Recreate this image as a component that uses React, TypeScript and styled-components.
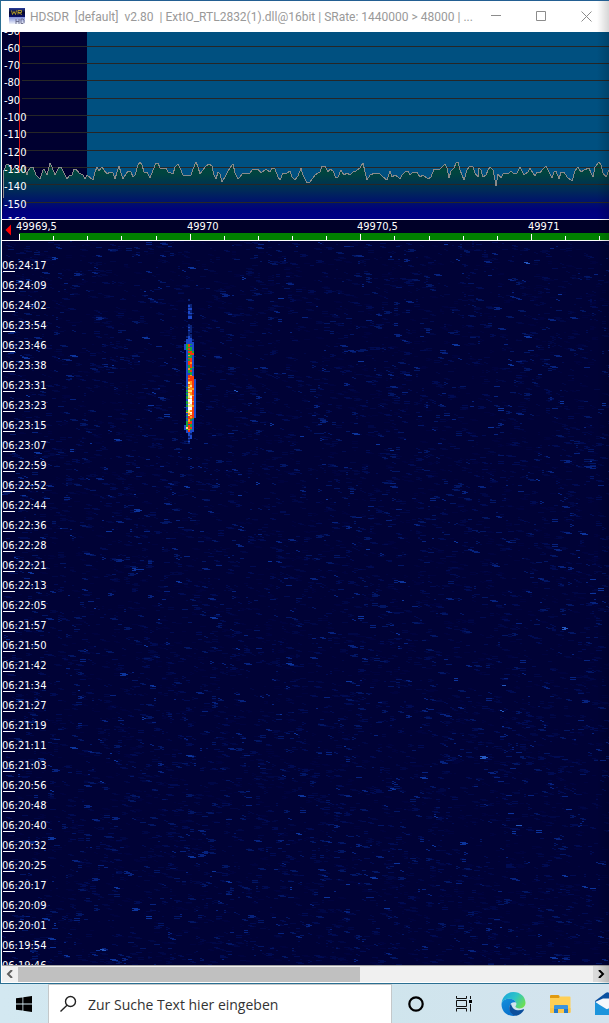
import React from "react";
import styled, { createGlobalStyle } from "styled-components";

const GlobalStyle = createGlobalStyle`
  * { box-sizing: border-box; }
  body { margin: 0; background: #d0e4ee; overflow: hidden; }
  button { border: 0; padding: 0; background: none; font: inherit; }
`;

const UI_FONT = '"Open Sans", "Noto Sans", sans-serif';
const TITLE_FONT = 'Roboto, "Open Sans", sans-serif';
const PLOT_FONT = '"DejaVu Sans Condensed", "DejaVu Sans", sans-serif';

const Desktop = styled.div`
  display: flex;
  flex-direction: column;
  height: 100vh;
`;

const Window = styled.main`
  position: relative;
  flex: 1;
  min-height: 0;
  display: flex;
  flex-direction: column;
  background: #fff;
  border: 1px solid #2b6f92;
  border-top-color: #235f92;
  border-right: 0;
  &::after {
    content: "";
    position: absolute;
    inset: 0 0 0 auto;
    width: 12px;
    background: linear-gradient(to right, rgba(0, 0, 0, 0), rgba(0, 0, 0, 0.16));
    pointer-events: none;
  }
`;

const TitleBar = styled.header`
  display: flex;
  align-items: center;
  height: 31px;
  padding-left: 8px;
  gap: 4px;
`;

const Title = styled.h1`
  flex: 1;
  min-width: 0;
  margin: 0;
  white-space: pre;
  font: 400 12px/20px ${TITLE_FONT};
  color: #999;
`;

const Controls = styled.div`
  display: flex;
`;

const ControlButton = styled.button`
  display: grid;
  place-items: center;
  width: 45px;
  height: 28px;
`;

const Plots = styled.div`
  flex: 1;
  min-height: 0;
  margin-left: 1px;
  display: flex;
  flex-direction: column;
`;

const PlotSvg = styled.svg<{ $height: number }>`
  display: block;
  flex: none;
  width: 100%;
  height: ${(p) => p.$height}px;
  font: 11px ${PLOT_FONT};
`;

const Waterfall = styled.section`
  position: relative;
  flex: 1;
  min-height: 0;
  overflow: hidden;
  background: #000236;
`;

const NoiseSvg = styled.svg`
  position: absolute;
  inset: 0;
  width: 100%;
  height: 100%;
`;

const TimeList = styled.ol`
  position: relative;
  margin: 0;
  padding: 14px 0 0;
  list-style: none;
`;

const TimeRow = styled.li`
  height: 20px;
  font: 11px/22px ${PLOT_FONT};
  color: #fff;
  background: linear-gradient(#fff, #fff) 1px 16px / 12px 1px no-repeat;
`;

const ScrollBar = styled.div`
  display: flex;
  flex: none;
  height: 18px;
  border-top: 1px solid #a0a0a0;
  border-bottom: 1px solid #fff;
  background: #f0f0f0;
`;

const ScrollButton = styled.button<{ $hot?: boolean }>`
  display: grid;
  place-items: center;
  width: 16px;
  background: ${(p) => (p.$hot ? "#dadada" : "#f0f0f0")};
`;

const Track = styled.div`
  flex: 1;
  padding-top: 1px;
`;

const Thumb = styled.div`
  width: 59.5%;
  height: 100%;
  background: #c0c0c0;
`;

const TaskBar = styled.footer`
  display: flex;
  height: 39px;
  overflow: hidden;
  background: linear-gradient(to right, #d3e8f1, #cfe5ed 60%, #d4e3ee);
`;

const TaskButton = styled.button<{ $width?: number }>`
  display: grid;
  place-items: center;
  flex: none;
  width: ${(p) => p.$width ?? 48}px;
  height: 40px;
`;

const SearchBox = styled.label`
  display: flex;
  align-items: center;
  flex: 1 0 200px;
  height: 40px;
  padding-left: 10px;
  gap: 10px;
  background: #fff;
  border: 1px solid #c4c8ca;
`;

const SearchInput = styled.input`
  flex: 1;
  min-width: 0;
  padding: 2px 0 0;
  border: 0;
  outline: 0;
  background: none;
  font: 14px/20px ${UI_FONT};
  &::placeholder {
    color: #333;
    opacity: 1;
  }
`;

const Pinned = styled.div`
  display: flex;
  flex: 0 0 119px;
  min-width: 0;
  margin-left: 2px;
  overflow: hidden;
`;

/* Trace samples as x,y pairs in thirds of a pixel, one list for each sweep. */
const SWEEPS: [number, number[]][] = [
  [0, [8,235,10,160,18,135,25,131,38,150,46,138,58,158,70,136,77,155,82,165,85,152,92,142,99,142,108,165,120,177,128,150,133,147,140,165,150,130,157,140,165,165,177,140,184,140,192,160,200,178,206,168,216,165,222,148,228,148,236,158,248,165,254,178,262,165,278,181,284,155,292,140,298,152,305,140,312,150,320,162,330,157,340,158,346,178,352,155,358,137,364,160,370,178,378,162,385,152,392,155,400,172,406,165,413,135,420,125,426,135,432,155,440,157,450,175,460,150,467,130,473,130,480,145,497,145,503,155,512,160,520,162,526,140,535,132,541,145,550,165,560,168,572,165,578,148,587,127,594,140,600,162]],
  [609, [0,150,10,137,18,133,26,138,33,165,40,178,45,155,50,162,57,187,65,172,72,158,80,145,90,133,97,160,105,178,112,172,120,158,140,158,150,148,165,148,174,158,190,147,200,155,207,145,216,147,224,172,230,180,240,160,250,163,260,152,266,170,275,180,285,168,293,145,300,165,312,188,320,185,335,165,350,155,358,137,366,137,374,155,382,147,390,153,398,175,405,170,413,150,422,165,432,158,440,165,450,155,460,153,470,143,480,130,486,155,493,180,502,165,515,158,528,160,540,170,552,180,560,152,568,170,575,165,585,172,592,178,598,165]],
  [1218, [0,152,5,152,12,165,20,155,32,155,42,170,52,165,66,178,75,170,85,147,102,147,108,140,117,133,123,145,129,173,136,152,145,145,150,130,156,127,163,150,173,180,183,150,192,137,202,140,208,160,215,172,219,145,225,150,232,170,240,165,246,150,253,140,260,150,266,180,270,198,276,162,284,173,292,162,310,160,315,152,325,163,332,160,342,140,350,158,355,165,365,155,373,145,380,160,387,168,394,155,402,158,412,147,420,137,428,155,437,173,445,155,451,152,458,178,465,157,473,157,483,170,497,182,506,152,516,140,525,155,535,150,548,143,555,160,561,170,568,140,578,127,585,135,592,158,599,170,609,150]],
];

const SWEEP_SPAN = 607;
const tracePoints: string[] = [];
for (let copy = 0; copy < 4; copy++) {
  for (const [offset, samples] of SWEEPS) {
    for (let i = 0; i < samples.length; i += 2) {
      if (copy > 0 && offset === 0 && i === 0) continue;
      const x = Math.round((offset + samples[i]) / 3) - 2 + copy * SWEEP_SPAN;
      const y = Math.round(samples[i + 1] / 3) + 88;
      tracePoints.push(`${x},${y}`);
    }
  }
}
const TRACE = tracePoints.join(" ");
const TRACE_AREA = `0,187 ${TRACE} ${SWEEP_SPAN * 4},187`;

/* Level in dB with the height of its grid line. */
const LEVELS: [number, number][] = [
  [-50, -3], [-60, 14], [-70, 31], [-80, 48], [-90, 66], [-100, 83],
  [-110, 100], [-120, 118], [-130, 135], [-140, 152], [-150, 170], [-160, 187],
];

function Spectrum() {
  return (
    <PlotSvg $height={187} role="img" aria-label="Spectrum">
      <defs>
        <linearGradient id="floor" gradientUnits="userSpaceOnUse" x1="0" y1="130" x2="0" y2="187">
          <stop offset="0" stopColor="#00483c" />
          <stop offset="0.2" stopColor="#004440" />
          <stop offset="0.5" stopColor="#002a58" />
          <stop offset="0.85" stopColor="#00007c" />
          <stop offset="1" stopColor="#000084" />
        </linearGradient>
      </defs>
      <rect width="100%" height="187" fill="#005080" />
      <rect width="85" height="187" fill="#000030" />
      <polygon points={TRACE_AREA} fill="url(#floor)" />
      {LEVELS.map(([db, y]) => (
        <rect key={db} x="20" y={y} width="100%" height="1" fill="#262626" />
      ))}
      <polyline points={TRACE} fill="none" stroke="#8a8a8a" shapeRendering="crispEdges" />
      <rect x="17" width="1" height="140" fill="#e01010" />
      {LEVELS.map(([db, y]) => (
        <text key={db} x="2" y={y + 6} fill="#fff">
          {db}
        </text>
      ))}
    </PlotSvg>
  );
}

const TICKS = Array.from({ length: 60 }, (_, i) => ({
  x: Math.round(17 + i * 34.13),
  major: i % 5 === 0,
  label: String(49969.5 + i / 10).replace(".", ","),
}));

function FrequencyScale() {
  return (
    <PlotSvg $height={22} role="img" aria-label="Frequency scale">
      <rect width="100%" height="22" fill="#fff" />
      <rect y="1" width="100%" height="20" fill="#000028" />
      <rect x="17" y="14" width="100%" height="7" fill="#008000" />
      <path d="M3.500 11l5.500-5.500v11z" fill="#f00" />
      {TICKS.map((t) => (
        <rect key={t.x} x={t.x} y={t.major ? 15 : 17} width="1" height={t.major ? 6 : 4} fill="#fff" />
      ))}
      {TICKS.filter((t) => t.major).map((t) => (
        <text key={t.x} x={t.x - 3} y="11" fill="#fff">
          {t.label}
        </text>
      ))}
    </PlotSvg>
  );
}

function makeRandom(seed: number) {
  let s = seed;
  return () => {
    s = (s * 1664525 + 1013904223) % 4294967296;
    return s / 4294967296;
  };
}

const NOISE_COLORS = ["#00033e", "#000746", "#000b52", "#021664", "#06227e", "#0c349c", "#2458c0"];
const NOISE_COUNTS = [3000, 2600, 1900, 1100, 560, 130, 8];
const random = makeRandom(2832);
const NOISE = NOISE_COLORS.map((color, level) => {
  let d = "";
  for (let i = 0; i < NOISE_COUNTS[level]; i++) {
    const x = Math.floor(random() * 304) * 2;
    const y = Math.floor(random() * 724);
    const w = 2 + Math.floor(random() * 3) * 2;
    d += `M${x} ${y}h${w}v1h-${w}z`;
    if (random() > 0.5) d += `M${x + 2} ${y + 1}h${w}v1h-${w}z`;
    if (random() > 0.8) d += `M${x} ${y + 2}h${w}v1h-${w}z`;
  }
  return { color, d };
});

const HEAT: Record<string, string> = {
  d: "#0a2274", b: "#1c48c8", g: "#18a838", r: "#f83808", o: "#ff9418", y: "#ffe088", w: "#ffffff",
};

/* Echo intensity: one string for each time step, one letter for each bin. */
const ECHO = (
  "..d.. ..... ..... ..dd. ..bd. ..dd. ..bb. ..dd. ..bd. ..bbd ..dd. ..bb. ..bb. ..... ..... ..... ..d.. ..dd. ..bd. " +
  "..dd. ..bd. ..dd. ..d.. ..dd. .dbd. ..bb. .bbbd .bbb. .bbbb bgrgb bgrbb bgggb bgrgb .bggb .brrg .bgrr " +
  ".bogb .bggb .brrb .bgrb .brrb .brob .brrb .bgrb .bgrg .bogb .bgrb .bggb .bbgb .brob .brrr .borr .brrrb " +
  ".boorb .byorb .brorb .boyrb .gyorb .booob .gyyrb .boorb .gyorb .byyob .gywrb .goyrb .bwwrb .gwwob .gywrb .bwyrb " +
  ".gyyob .bwwrb .bwwrb .gyorb .oywrb .boyrb .gyrrb .brorb .grrg .bogb .gorb .grrb .gbgb bgrgb byrrb bgogb .brbb " +
  ".bbb. ..bd. ..bb. ..db. ..bb. ..d.. ..b.. ..d.."
).split(" ");
const ECHO_TOP = 58;
const ECHO_STEP = 145 / ECHO.length;

const START_LABELS = [
  "06:24:17", "06:24:09", "06:24:02", "06:23:54", "06:23:46", "06:23:38", "06:23:31", "06:23:23", "06:23:15",
  "06:23:07", "06:22:59", "06:22:52", "06:22:44", "06:22:36", "06:22:28", "06:22:21", "06:22:13", "06:22:05",
  "06:21:57", "06:21:50", "06:21:42", "06:21:34", "06:21:27", "06:21:19", "06:21:11", "06:21:03", "06:20:56",
  "06:20:48", "06:20:40", "06:20:32", "06:20:25", "06:20:17", "06:20:09", "06:20:01", "06:19:54", "06:19:46",
];

function WaterfallView() {
  return (
    <Waterfall>
      <NoiseSvg aria-hidden="true" shapeRendering="crispEdges">
        <defs>
          <pattern id="noise" width="608" height="724" patternUnits="userSpaceOnUse">
            {NOISE.map((n) => (
              <path key={n.color} d={n.d} fill={n.color} />
            ))}
          </pattern>
        </defs>
        <rect width="100%" height="100%" fill="url(#noise)" />
        {ECHO.map((row, i) =>
          row.split("").map((cell, bin) =>
            HEAT[cell] ? (
              <rect
                key={`${i}-${bin}`}
                x={182 + bin * 2}
                y={Math.round(ECHO_TOP + i * ECHO_STEP)}
                width="2"
                height={Math.round(ECHO_TOP + (i + 1) * ECHO_STEP) - Math.round(ECHO_TOP + i * ECHO_STEP)}
                fill={HEAT[cell]}
              />
            ) : null
          )
        )}
      </NoiseSvg>
      <TimeList>
        {START_LABELS.map((t) => (
          <TimeRow key={t}>{t}</TimeRow>
        ))}
      </TimeList>
    </Waterfall>
  );
}

function AppIcon() {
  return (
    <svg width="17" height="17" viewBox="0 0 17 17" aria-hidden="true">
      <defs>
        <linearGradient id="appTop" x1="0" y1="0" x2="0" y2="1">
          <stop offset="0" stopColor="#2a3f9c" />
          <stop offset="0.5" stopColor="#05062c" />
          <stop offset="1" stopColor="#08106c" />
        </linearGradient>
        <linearGradient id="appBottom" x1="0" y1="0" x2="0" y2="1">
          <stop offset="0" stopColor="#7f8fd8" />
          <stop offset="1" stopColor="#f2f4fc" />
        </linearGradient>
      </defs>
      <rect width="16" height="9" fill="url(#appTop)" />
      <rect y="9" width="16" height="7" fill="url(#appBottom)" />
      <path d="M2.500 2.500l1 4 1.500-3 1.500 3 1-4M9 6.500v-4h3.500v2H9l4 2" fill="none" stroke="#c8b028" strokeWidth="0.8" />
      <path d="M7 11v5M10 11v5M7 13.500h3M12 11v4.500h2l1-1v-2.500l-1-1z" fill="none" stroke="#666a88" strokeWidth="0.9" />
    </svg>
  );
}

function EdgeIcon() {
  return (
    <svg width="25" height="24" viewBox="0 0 24 24" aria-hidden="true">
      <defs>
        <linearGradient id="edgeTop" x1="0" y1="0.2" x2="1" y2="0.7">
          <stop offset="0" stopColor="#1aa5dc" />
          <stop offset="0.5" stopColor="#2cc4c8" />
          <stop offset="1" stopColor="#6ee050" />
        </linearGradient>
        <linearGradient id="edgeLeft" x1="0" y1="0" x2="0.5" y2="1">
          <stop offset="0" stopColor="#1590dc" />
          <stop offset="1" stopColor="#0870cc" />
        </linearGradient>
      </defs>
      <path d="M0 12C.6 4.500 5.800 0 12 0c7 0 12 5 12 10.800 0 3.400-2.400 5.600-5.800 5.600-3 0-4.600-1.200-4.200-2.200.9-1 1.200-2.100.7-3.300C13.600 8 10.700 6.800 7.700 6.800 3.800 6.800.8 9 0 12z" fill="url(#edgeTop)" />
      <path d="M0 12c.8-3.400 4-5.200 7.700-5.200 3.400 0 6 1.500 6.800 3.700-2.700-1-5.900.2-6.500 4-.5 4 2 8 6.300 9.200C7 25.200 0 20.500 0 12z" fill="url(#edgeLeft)" />
      <path d="M9.500 11.700C7.200 14 7.300 18 9.400 20.800c1.500 2 3.600 3 5.400 2.900 3.300-.7 6-2.900 7.700-5.800.3-.6-.1-.9-.7-.6-5.600 2.500-11.300.4-12.300-5.600z" fill="#0c4f9c" />
    </svg>
  );
}

function FolderIcon() {
  return (
    <svg width="23" height="20" viewBox="0 0 23 20" aria-hidden="true">
      <path d="M1 2q0-1 1-1h7q1 0 1.500 1l.5 2H1z" fill="#e09a10" />
      <path d="M1 4h9l1-1.500h9.500q1 0 1 1V18q0 1-1 1H2q-1 0-1-1z" fill="#ffcf55" />
      <path d="M1 14h20.500v4q0 1-1 1H2q-1 0-1-1z" fill="#fbc64c" />
      <path d="M5 19v-7q0-1 1-1h12q1 0 1 1v7h-4v-4H9v4z" fill="#3c94dc" />
      <path d="M5 15h4v4H5zM15 15h4v4h-4z" fill="#2478c8" />
    </svg>
  );
}

function MailIcon() {
  return (
    <svg width="25" height="24" viewBox="0 0 25 24" aria-hidden="true">
      <path d="M0 9L11 .8q1.500-1 3 0L25 9v3H0z" fill="#0a50a0" />
      <path d="M0 10l8-3.500h9l8 3.500-12.500 9z" fill="#f4f8fc" />
      <path d="M12.500 17L25 10v13H0z" fill="#1a98e0" />
      <path d="M0 10l13 8 12 5H0z" fill="#1c94dc" />
    </svg>
  );
}

export default function App() {
  return (
    <Desktop>
      <GlobalStyle />
      <Window>
        <TitleBar>
          <AppIcon />
          <Title>{"HDSDR  [default]  v2.80  | ExtIO_RTL2832(1).dll@16bit | SRate: 1440000 > 48000 | ..."}</Title>
          <Controls>
            <ControlButton aria-label="Minimize">
              <svg width="11" height="11"><path d="M0 4.500h10" stroke="#8c8c8c" /></svg>
            </ControlButton>
            <ControlButton aria-label="Maximize">
              <svg width="11" height="11"><path d="M.5.5h9v9h-9z" fill="none" stroke="#8c8c8c" /></svg>
            </ControlButton>
            <ControlButton aria-label="Close">
              <svg width="11" height="11"><path d="M.5.5l10 10M10.500.5l-10 10" stroke="#8c8c8c" /></svg>
            </ControlButton>
          </Controls>
        </TitleBar>
        <Plots>
          <Spectrum />
          <FrequencyScale />
          <WaterfallView />
          <ScrollBar>
            <ScrollButton aria-label="Scroll left">
              <svg width="8" height="8"><path d="M6 0L2 4l4 4" fill="none" stroke="#606060" strokeWidth="2" /></svg>
            </ScrollButton>
            <Track>
              <Thumb />
            </Track>
            <ScrollButton $hot aria-label="Scroll right">
              <svg width="8" height="8"><path d="M2 0l4 4-4 4" fill="none" stroke="#000" strokeWidth="2" /></svg>
            </ScrollButton>
          </ScrollBar>
        </Plots>
      </Window>
      <TaskBar>
        <TaskButton aria-label="Start">
          <svg width="16" height="16" viewBox="0 0 16 16">
            <path d="M0 2.300l6.500-.9v6.200H0zM7.300 1.300L16 0v7.600H7.300zM0 8.400h6.500v6.200L0 13.700zM7.300 8.400H16V16l-8.700-1.200z" />
          </svg>
        </TaskButton>
        <SearchBox>
          <svg width="19" height="18" viewBox="0 0 19 18" aria-hidden="true">
            <circle cx="11.500" cy="6.500" r="5" fill="none" stroke="#222" strokeWidth="1.400" />
            <path d="M8 10.200L1.500 16.500" stroke="#222" strokeWidth="1.400" />
          </svg>
          <SearchInput type="text" placeholder="Zur Suche Text hier eingeben" aria-label="Zur Suche Text hier eingeben" />
        </SearchBox>
        <TaskButton aria-label="Cortana">
          <svg width="16" height="16">
            <circle cx="8" cy="8" r="6.700" fill="none" stroke="#000" strokeWidth="2.200" />
          </svg>
        </TaskButton>
        <TaskButton aria-label="Task View">
          <svg width="16" height="16">
            <path d="M.5 0v2.500h10V0M.5 4.500h10v6H.5zM.5 15.500v-3h10v3M14.500 0v3M14.500 8v7.500" fill="none" stroke="#111" />
            <path d="M13 4h3v3h-3z" fill="#000" />
          </svg>
        </TaskButton>
        <Pinned>
          <TaskButton $width={47} aria-label="Microsoft Edge"><EdgeIcon /></TaskButton>
          <TaskButton $width={47} aria-label="Explorer"><FolderIcon /></TaskButton>
          <TaskButton $width={47} aria-label="Mail"><MailIcon /></TaskButton>
        </Pinned>
      </TaskBar>
    </Desktop>
  );
}
